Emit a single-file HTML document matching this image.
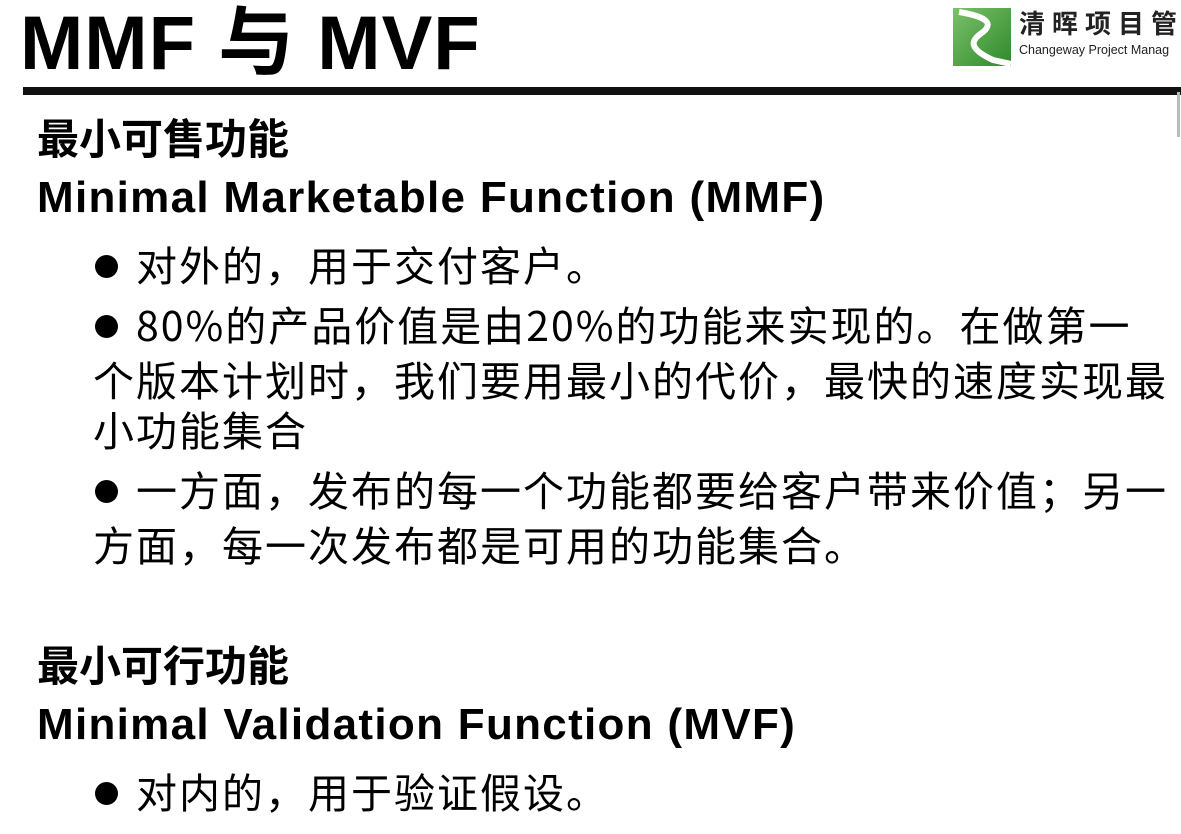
<!DOCTYPE html>
<html><head><meta charset="utf-8"><style>
html,body{margin:0;padding:0;background:#fff;width:1181px;height:834px;overflow:hidden;position:relative}
.t{position:absolute;white-space:nowrap;color:#000;line-height:1;font-family:"Liberation Sans","Noto Sans CJK SC",sans-serif}
.h{font-weight:bold;font-size:40px}
.e{font-size:44px;letter-spacing:1.3px}
.b{font-size:41px;font-family:"Noto Sans CJK SC","Liberation Sans",sans-serif;font-weight:400;letter-spacing:2px}
.dot{display:inline-block;width:23px;height:23px;border-radius:50%;background:#000;vertical-align:middle;margin-right:18px;position:relative;top:-3px}
</style></head><body>
<div class="t" style="left:20px;top:6px;font-size:76px;font-weight:bold;font-family:'Liberation Sans','Noto Sans CJK SC',sans-serif;letter-spacing:1px">MMF 与 MVF</div>
<div style="position:absolute;left:23px;top:87px;width:1158px;height:8px;background:#111"></div>
<div style="position:absolute;left:1177px;top:92px;width:3px;height:45px;background:#bbb"></div>
<svg style="position:absolute;left:953px;top:8px" width="58" height="58" viewBox="0 0 58 58">
<defs><linearGradient id="g" x1="0" y1="0" x2="1" y2="1"><stop offset="0" stop-color="#7cc06a"/><stop offset="1" stop-color="#2e8a2a"/></linearGradient></defs>
<rect x="0" y="0" width="58" height="58" fill="url(#g)"/>
<path d="M6 4 C30 8 42 14 30 24 C18 32 14 40 40 52 L58 56" stroke="#fff" stroke-width="6" fill="none"/>
</svg>
<div class="t" style="left:1019px;top:10px;font-size:26px;font-weight:bold;letter-spacing:7px;color:#222;font-family:'Noto Sans CJK SC',sans-serif">清晖项目管</div>
<div class="t" style="left:1019px;top:44px;font-size:12.5px;color:#222">Changeway Project Manag</div>

<div class="t h" style="left:37px;top:116px;font-family:'Noto Sans CJK SC',sans-serif;font-size:42px">最小可售功能</div>
<div class="t h e" style="left:37px;top:176px">Minimal Marketable Function (MMF)</div>
<div class="t b" style="left:95px;top:243px"><span class="dot"></span>对外的，用于交付客户。</div>
<div class="t b" style="left:95px;top:303px"><span class="dot"></span>80%的产品价值是由20%的功能来实现的。在做第一</div>
<div class="t b" style="left:93px;top:358px">个版本计划时，我们要用最小的代价，最快的速度实现最</div>
<div class="t b" style="left:93px;top:408px">小功能集合</div>
<div class="t b" style="left:95px;top:468px"><span class="dot"></span>一方面，发布的每一个功能都要给客户带来价值；另一</div>
<div class="t b" style="left:93px;top:523px">方面，每一次发布都是可用的功能集合。</div>

<div class="t h" style="left:37px;top:643px;font-family:'Noto Sans CJK SC',sans-serif;font-size:42px">最小可行功能</div>
<div class="t h e" style="left:37px;top:703px">Minimal Validation Function (MVF)</div>
<div class="t b" style="left:95px;top:770px"><span class="dot"></span>对内的，用于验证假设。</div>
</body></html>
